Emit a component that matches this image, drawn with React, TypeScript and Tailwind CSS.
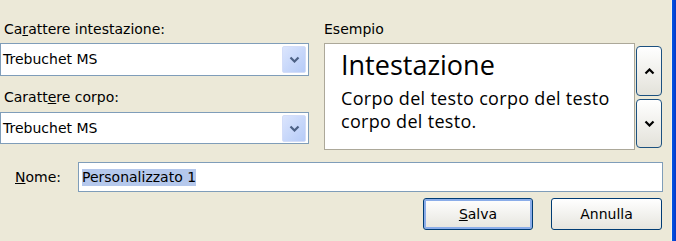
function Chevron({ up = false, className = "" }: { up?: boolean; className?: string }) {
  return (
    <svg width="11" height="7" viewBox="0 0 11 7" className={className}>
      <path
        d={up ? "M1.5 5.5 L5.5 1.5 L9.5 5.5" : "M1.5 1.5 L5.5 5.5 L9.5 1.5"}
        fill="none"
        stroke="currentColor"
        strokeWidth="2.2"
      />
    </svg>
  );
}

function Combo({ value }: { value: string }) {
  return (
    <div className="flex h-full w-full items-center border border-[#7f9db9] bg-white pl-[2px] pr-[2px]">
      <span className="flex-1 text-black">{value}</span>
      <div className="flex h-[27px] w-[24px] items-center justify-center rounded-[2px] border border-[#d3ddf8] bg-gradient-to-br from-[#dbe5fd] to-[#b6cbf7] text-[#4d6185]">
        <Chevron />
      </div>
    </div>
  );
}

function XpButton({ children, active = false }: { children: React.ReactNode; active?: boolean }) {
  return (
    <button
      type="button"
      className={`flex h-[32px] w-full items-center justify-center rounded-[3px] border border-[#003c74] bg-gradient-to-b from-white to-[#e6e5de] text-black ${
        active ? "shadow-[inset_0_0_0_2px_#8bade9]" : ""
      }`}
    >
      {children}
    </button>
  );
}

export default function App() {
  return (
    <div className="flex h-[241px] w-[676px] overflow-hidden bg-[#ece9d8] font-['DejaVu_Sans',sans-serif] text-[14px] text-black">
      <div className="flex w-[671px] flex-col">
        <div className="flex pt-[21px]">
          {/* left column: font combos */}
          <div className="flex w-[309px] flex-col">
            <div className="h-[17px] pl-[4px] leading-[17px]">
              Ca<span className="underline">r</span>attere intestazione:
            </div>
            <div className="mt-[5px] h-[33px]">
              <Combo value="Trebuchet MS" />
            </div>
            <div className="mt-[13px] h-[17px] pl-[4px] leading-[17px]">
              Caratt<span className="underline">e</span>re corpo:
            </div>
            <div className="mt-[6px] h-[32px]">
              <Combo value="Trebuchet MS" />
            </div>
          </div>

          {/* right column: preview */}
          <div className="ml-[15px] flex flex-col">
            <div className="h-[17px] leading-[17px]">Esempio</div>
            <div className="mt-[5px] flex">
              <div className="h-[107px] w-[311px] border border-[#aca899] bg-white pl-[16px] pt-[7px] font-['Open_Sans',sans-serif]">
                <div className="text-[27px] leading-[28px]">Intestazione</div>
                <div className="mt-[8px] text-[18px] leading-[23px] tracking-[0.3px]">
                  Corpo del testo corpo del testo
                  <br />
                  corpo del testo.
                </div>
              </div>
              <div className="ml-[1px] flex flex-col gap-[3px] pt-[3px]">
                <div className="flex h-[50px] w-[26px] items-center justify-center rounded-[4px] border border-[#1c5180] bg-gradient-to-b from-white to-[#e3e2da]">
                  <Chevron up />
                </div>
                <div className="flex h-[49px] w-[26px] items-center justify-center rounded-[4px] border border-[#1c5180] bg-gradient-to-b from-white to-[#e3e2da]">
                  <Chevron />
                </div>
              </div>
            </div>
          </div>
        </div>

        {/* name row */}
        <div className="mt-[12px] flex items-center">
          <div className="w-[78px] pl-[15px]">
            <span className="underline">N</span>ome:
          </div>
          <div className="flex h-[30px] w-[585px] items-center border border-[#7f9db9] bg-white pl-[3px]">
            <span className="bg-[#b5c8ec] leading-[17px]">Personalizzato 1</span>
          </div>
        </div>

        {/* buttons */}
        <div className="mt-[6px] flex justify-end gap-[18px] pr-[9px]">
          <div className="w-[110px]">
            <XpButton active>
              <span>
                <span className="underline">S</span>alva
              </span>
            </XpButton>
          </div>
          <div className="w-[111px]">
            <XpButton>Annulla</XpButton>
          </div>
        </div>
      </div>
      <div className="w-[1px] bg-[#f4f2ea]" />
      <div className="w-[4px] bg-gradient-to-r from-[#0055e5] to-[#0838c8]" />
    </div>
  );
}
